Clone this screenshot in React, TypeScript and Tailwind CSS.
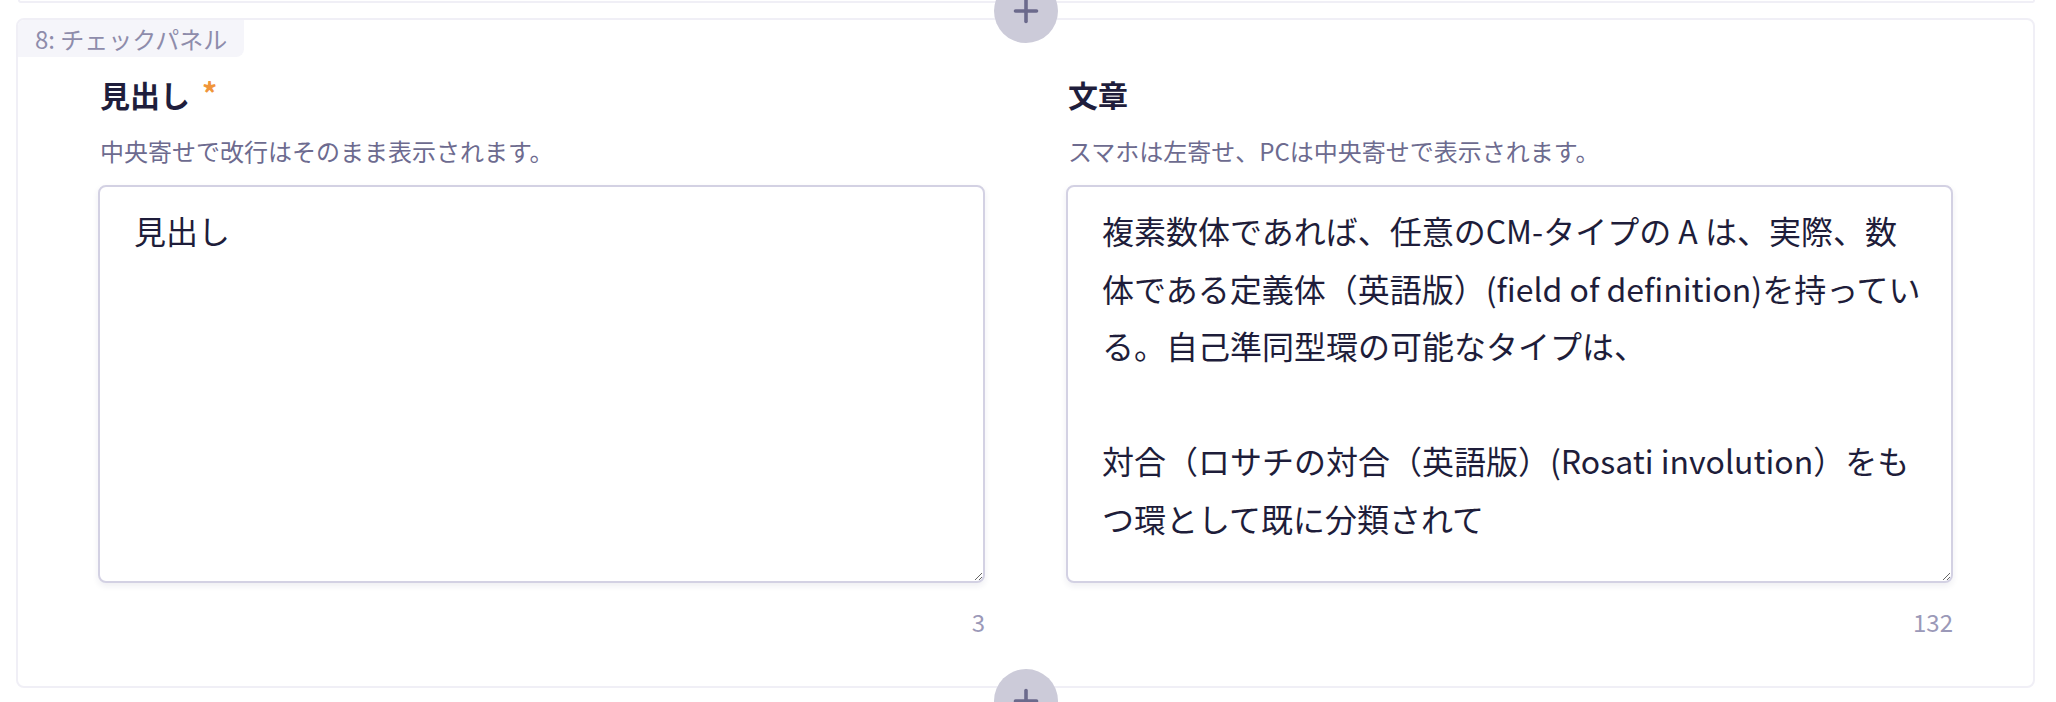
import { Plus } from 'lucide-react';

// line breaks follow the reference's wrapping, since fallback fonts measure differently
const body =
  '複素数体であれば、任意のCM-タイプの A は、実際、数\n体である定義体（英語版）(field of definition)を持ってい\nる。自己準同型環の可能なタイプは、\n\n対合（ロサチの対合（英語版）(Rosati involution）をも\nつ環として既に分類されて';

const fields = [
  {
    id: 'heading',
    label: '見出し',
    required: true,
    help: '中央寄せで改行はそのまま表示されます。',
    value: '見出し',
    count: 3,
  },
  {
    id: 'body',
    label: '文章',
    required: false,
    help: 'スマホは左寄せ、PCは中央寄せで表示されます。',
    value: body,
    count: 132,
  },
];

function AddButton({ className }: { className: string }) {
  return (
    <button
      type="button"
      className={`absolute left-[994px] z-10 flex h-16 w-16 items-center justify-center rounded-full bg-[#cccbd9] text-[#6b6a8c] ${className}`}
    >
      <Plus className="h-9 w-9" strokeWidth={2.4} />
    </button>
  );
}

export default function App() {
  return (
    <div
      className="relative h-[702px] overflow-hidden bg-white pl-4 pr-[21px]"
      style={{ fontFamily: '"Noto Sans CJK JP", "Noto Sans", sans-serif' }}
    >
      {/* previous panel's bottom edge */}
      <div className="ml-[2px] h-[3px] rounded-b-lg border-x-2 border-b-2 border-[#f0eff6]" />

      <AddButton className="top-[-21px]" />

      <div className="relative mt-[15px] rounded-lg border-2 border-[#f0eff6] bg-white px-20 pt-[52px] pb-[46px]">
        <div className="absolute top-0 left-0 flex h-[37px] items-center rounded-tl-md rounded-br-lg bg-[#f5f5fa] pl-[17px] pr-[17px] text-[24px] text-[#8e8cab]">
          8: チェックパネル
        </div>

        <div className="grid grid-cols-2 gap-x-[81px]">
          {fields.map((f) => (
            <div key={f.id} className="flex flex-col">
              <div className="flex items-center pl-[2px] text-[30px] leading-[45px] font-bold text-[#1f1e3c]">
                {f.label}
                {f.required && (
                  <span className="mb-[6px] ml-[12px] text-[30px] leading-[30px] text-[#f0953a]">*</span>
                )}
              </div>
              <p className="mt-4 pl-[2px] text-[24px] leading-[36px] text-[#6d6b8f]">{f.help}</p>
              <textarea
                defaultValue={f.value}
                wrap="off"
                className="mt-4 h-[398px] w-full overflow-hidden rounded-lg border-2 border-[#d3d1e3] bg-white pt-[15px] pr-[20px] pl-[34px] text-[32px] leading-[57.6px] text-[#1e1d3a] shadow-[0_3px_6px_rgba(40,38,90,0.08)] outline-none"
              />
              <div className="mt-[21px] text-right text-[24px] leading-[36px] text-[#9b99b8]">
                {f.count}
              </div>
            </div>
          ))}
        </div>
      </div>

      <AddButton className="top-[669px]" />
    </div>
  );
}
